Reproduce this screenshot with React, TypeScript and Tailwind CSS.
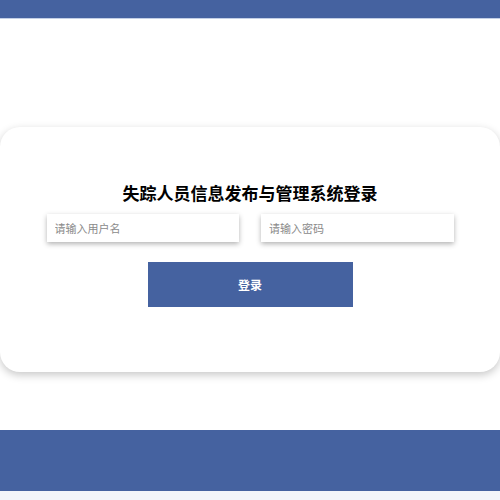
import React from "react";

function LoginCard() {
  return (
    <div className="w-full rounded-[20px] bg-white pt-[56px] pb-[65px] shadow-[0_3px_8px_rgba(0,0,0,0.22)]">
      <h1 className="text-center font-['Liberation_Serif','Noto_Sans_CJK_SC',serif] text-[17px] font-bold leading-[24px] text-black">
        失踪人员信息发布与管理系统登录
      </h1>
      <div className="mx-auto mt-[7px] flex w-[407px] gap-[22px]">
        <input
          className="h-[28px] flex-1 bg-white px-[8px] text-[11px] text-gray-700 shadow-[0_2px_5px_rgba(0,0,0,0.3)] outline-none placeholder:text-[#8a8a8a]"
          placeholder="请输入用户名"
        />
        <input
          type="password"
          className="h-[28px] flex-1 bg-white px-[8px] text-[11px] text-gray-700 shadow-[0_2px_5px_rgba(0,0,0,0.3)] outline-none placeholder:text-[#8a8a8a]"
          placeholder="请输入密码"
        />
      </div>
      <div className="mt-[20px] flex justify-center">
        <button className="h-[45px] w-[205px] bg-[#4562a0] text-[12px] font-bold text-white">
          登录
        </button>
      </div>
    </div>
  );
}

export default function App() {
  return (
    <div className="flex h-[500px] w-[500px] flex-col bg-white font-['Noto_Sans_CJK_SC',sans-serif]">
      <div className="h-[19px] w-full border-b border-[#c3cfe6] bg-[#4562a0]" />
      <div className="mt-[108px] w-full">
        <LoginCard />
      </div>
      <div className="mt-[58px] h-[61px] w-full bg-[#4562a0]" />
      <div className="flex-1 bg-[#f3f5fa]" />
    </div>
  );
}
